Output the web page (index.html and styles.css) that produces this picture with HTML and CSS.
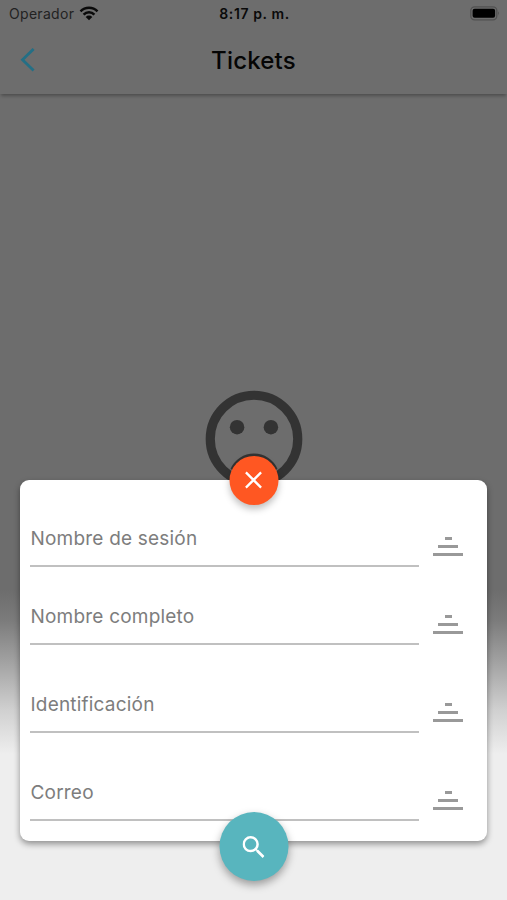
FILE: index.html
```html
<!DOCTYPE html>
<html lang="es">
<head>
    <meta charset="UTF-8">
    <meta name="viewport" content="width=device-width, initial-scale=1.0">
    <title>Tickets</title>
    <link rel="stylesheet" href="styles.css">
</head>
<body>
    <div class="screen">
        <div class="status-bar">
            <div class="carrier">
                <span>Operador</span>
                <svg class="wifi" viewBox="0 0 20 15">
                    <path d="M1.5 5.4a12 12 0 0 1 17 0M4.6 8.6a7.6 7.6 0 0 1 10.8 0" fill="none" stroke="#0a0a0a" stroke-width="2.5"/>
                    <path d="M10 14.3l-3.3-3.4a4.7 4.7 0 0 1 6.6 0z" fill="#0a0a0a"/>
                </svg>
            </div>
            <div class="clock">8:17 p. m.</div>
            <div class="battery">
                <svg viewBox="0 0 30 15">
                    <rect x="0.8" y="0.8" width="26" height="13" rx="3.8" fill="none" stroke="#515151" stroke-width="1.3"/>
                    <rect x="2.6" y="2.8" width="22.5" height="9" rx="2" fill="#000"/>
                    <path d="M28 5.2q1.8 2.1 0 4.2z" fill="#484848"/>
                </svg>
            </div>
        </div>
        <header class="nav">
            <svg class="back" viewBox="0 0 16 26">
                <path d="M13.6 2L2.5 12.8 13.6 23.6" fill="none" stroke="#246f85" stroke-width="2.8"/>
            </svg>
            <h1>Tickets</h1>
        </header>
        <main class="content">
            <svg class="face" viewBox="0 0 24 24">
                <circle cx="12" cy="12" r="9.05" fill="none" stroke="#333" stroke-width="1.9"/>
                <circle cx="8.5" cy="9.55" r="1.5" fill="#333"/>
                <circle cx="15.5" cy="9.55" r="1.5" fill="#333"/>
                <path d="M7.6 18.4a4.8 4.8 0 0 1 8.8 0" fill="none" stroke="#333" stroke-width="1"/>
            </svg>
            <form class="panel">
                <button type="button" class="close">
                    <svg viewBox="0 0 18 18"><path d="M1.4 1.4l15.2 15.2M16.6 1.4L1.4 16.6" stroke="#fff" stroke-width="2.3"/></svg>
                </button>
                <div class="row">
                    <label>Nombre de sesión</label>
                    <div class="bars"><i></i><i></i><i></i></div>
                </div>
                <div class="row">
                    <label>Nombre completo</label>
                    <div class="bars"><i></i><i></i><i></i></div>
                </div>
                <div class="row tall">
                    <label>Identificación</label>
                    <div class="bars"><i></i><i></i><i></i></div>
                </div>
                <div class="row tall">
                    <label>Correo</label>
                    <div class="bars"><i></i><i></i><i></i></div>
                </div>
                <button type="button" class="search">
                    <svg viewBox="3 3 17.5 17.5"><path fill="#fff" d="M15.5 14h-.79l-.28-.27A6.471 6.471 0 0 0 16 9.5 6.5 6.5 0 1 0 9.5 16c1.61 0 3.09-.59 4.23-1.57l.27.28v.79l5 4.99L20.49 19l-4.99-5zm-6 0C7.01 14 5 11.99 5 9.5S7.01 5 9.5 5 14 7.01 14 9.5 11.99 14 9.5 14z"/></svg>
                </button>
            </form>
        </main>
    </div>
</body>
</html>
```
FILE: styles.css
```css
* {
    box-sizing: border-box;
}
body {
    margin: 0;
    font-family: Inter, Roboto, sans-serif;
}
.screen {
    display: flex;
    flex-direction: column;
    height: 900px;
    overflow: hidden;
    background: linear-gradient(#6d6d6d 590px, #7b7b7b 620px, #a0a0a0 660px, #d0d0d0 710px, #eee 754px);
}
.status-bar {
    display: grid;
    grid-template-columns: 1fr auto 1fr;
    align-items: center;
    height: 28px;
    padding: 0 7px 2px 9px;
    font-size: 14px;
    color: #222;
}
.carrier {
    display: flex;
    align-items: center;
    gap: 5px;
    letter-spacing: 0.3px;
}
.wifi {
    width: 20px;
    height: 15px;
}
.clock {
    font-weight: 600;
    letter-spacing: 0.6px;
    color: #0a0a0a;
}
.battery {
    justify-self: end;
    height: 15px;
}
.battery svg {
    display: block;
    width: 30px;
    height: 15px;
}
.nav {
    display: grid;
    grid-template-columns: 1fr auto 1fr;
    align-items: center;
    height: 66px;
    padding: 0 20px 2px;
    box-shadow: 0 3px 3px -1px rgba(0, 0, 0, 0.28);
}
.back {
    width: 16px;
    height: 26px;
}
.nav h1 {
    margin: 0;
    font-size: 24px;
    font-weight: 500;
    letter-spacing: 0.2px;
    color: #050505;
}
.content {
    display: flex;
    flex-direction: column;
    align-items: center;
    padding-top: 287px;
}
.face {
    flex: none;
    width: 116px;
    height: 116px;
}
.panel {
    position: relative;
    width: 467px;
    height: 361px;
    margin-top: -17px;
    padding: 21px 24px 0 10px;
    background: #fff;
    border-radius: 9px;
    box-shadow: 0 3px 6px rgba(0, 0, 0, 0.4);
}
.row {
    display: flex;
    align-items: flex-end;
    justify-content: space-between;
    height: 66px;
}
.row + .row {
    height: 78px;
}
.row + .tall {
    height: 88px;
}
.row label {
    width: 389px;
    height: 41px;
    border-bottom: 2px solid #c0c0c0;
    font-size: 19px;
    line-height: 25px;
    letter-spacing: 0.2px;
    text-indent: 0.5px;
    color: #7d7d7d;
}
.bars {
    display: flex;
    flex-direction: column;
    align-items: center;
    gap: 5px;
    width: 30px;
    padding-bottom: 11px;
}
.bars i {
    width: 30px;
    height: 3px;
    background: #999;
}
.bars i:nth-child(1) {
    width: 7px;
}
.bars i:nth-child(2) {
    width: 20px;
}
.close,
.search {
    position: absolute;
    left: 50%;
    display: flex;
    align-items: center;
    justify-content: center;
    padding: 0;
    border: none;
    border-radius: 50%;
    transform: translateX(-50%);
}
.close {
    top: -24.5px;
    width: 49px;
    height: 49px;
    background: #ff5722;
    box-shadow: 0 4px 7px rgba(0, 0, 0, 0.25);
}
.close svg {
    width: 18px;
    height: 18px;
}
.search {
    bottom: -40px;
    width: 69px;
    height: 69px;
    background: #58b5be;
    box-shadow: 0 4px 8px rgba(0, 0, 0, 0.35);
}
.search svg {
    width: 22px;
    height: 22px;
}
```
